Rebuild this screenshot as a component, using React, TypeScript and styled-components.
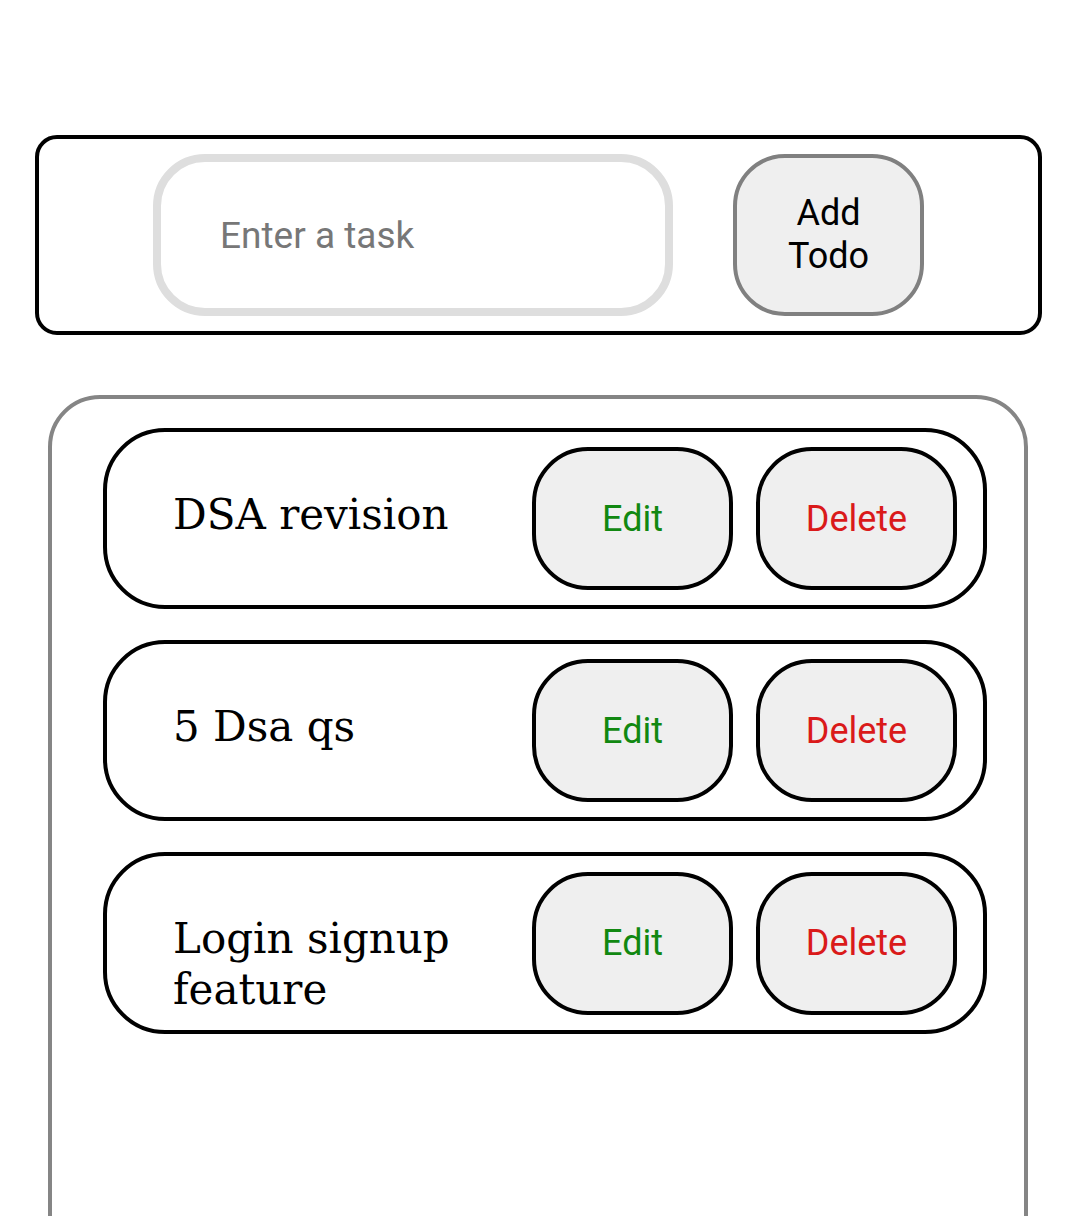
import React, { useState } from 'react';
import styled, { createGlobalStyle } from 'styled-components';

const GlobalStyle = createGlobalStyle`
  html, body {
    margin: 0;
    padding: 0;
    background: #fff;
  }
  body {
    font-family: Roboto, "Liberation Sans", sans-serif;
  }
`;

const Page = styled.div`
  display: flex;
  flex-direction: column;
  padding: 135px 37px 0 35px;
  gap: 60px;
  height: 1216px;
  box-sizing: border-box;
  overflow: hidden;
`;

const Form = styled.form`
  display: flex;
  justify-content: center;
  align-items: center;
  gap: 60px;
  padding: 15px 0;
  border: 4px solid #000;
  border-radius: 22px;
  width: 1007px;
  box-sizing: border-box;
`;

const TaskInput = styled.input`
  width: 520px;
  height: 162px;
  box-sizing: border-box;
  border: 8px solid #dedede;
  border-radius: 52px;
  padding: 0 0 0 59px;
  font-family: Roboto, "Liberation Sans", sans-serif;
  font-size: 37px;
  color: #222;
  outline: none;
  background: #fff;

  &::placeholder {
    color: #777;
  }
`;

const AddButton = styled.button`
  width: 191px;
  height: 162px;
  box-sizing: border-box;
  border: 4px solid #808080;
  border-radius: 52px;
  background: #efefef;
  font-family: Roboto, "Liberation Sans", sans-serif;
  font-size: 36px;
  line-height: 43px;
  color: #000;
  padding: 0 30px;
`;

const List = styled.div`
  display: flex;
  flex-direction: column;
  gap: 31px;
  margin-left: 13px;
  width: 980px;
  box-sizing: border-box;
  border: 4px solid #858585;
  border-radius: 52px 52px 0 0;
  padding: 29px 37px 0 51px;
  flex: 1;
  margin-bottom: -60px;
`;

const Card = styled.div`
  display: flex;
  align-items: center;
  gap: 23px;
  border: 4px solid #000;
  border-radius: 62px;
  padding: 15px 26px 15px 66px;
  width: 884px;
  box-sizing: border-box;
`;

const TaskText = styled.div`
  flex: 1;
  align-self: flex-start;
  margin-top: 42px;
  font-family: "DejaVu Serif", "Liberation Serif", serif;
  font-size: 42px;
  line-height: 51px;
  color: #000;
`;

const ActionButton = styled.button<{ $tone: 'edit' | 'delete' }>`
  width: 201px;
  height: 143px;
  box-sizing: border-box;
  border: 4px solid #000;
  border-radius: 56px;
  background: #efefef;
  font-family: Roboto, "Liberation Sans", sans-serif;
  font-size: 36px;
  color: ${({ $tone }) => ($tone === 'edit' ? '#118811' : '#da1a1a')};
`;

type Todo = { id: number; text: string };

const initial: Todo[] = [
  { id: 1, text: 'DSA revision' },
  { id: 2, text: '5 Dsa qs' },
  { id: 3, text: 'Login signup feature' },
];

export default function App() {
  const [todos, setTodos] = useState<Todo[]>(initial);
  const [value, setValue] = useState('');

  const addTodo = (e: React.FormEvent) => {
    e.preventDefault();
    if (!value.trim()) return;
    setTodos([...todos, { id: Date.now(), text: value }]);
    setValue('');
  };

  return (
    <>
      <GlobalStyle />
      <Page>
        <Form onSubmit={addTodo}>
          <TaskInput
            placeholder="Enter a task"
            value={value}
            onChange={(e) => setValue(e.target.value)}
          />
          <AddButton type="submit">Add Todo</AddButton>
        </Form>
        <List>
          {todos.map((todo) => (
            <Card key={todo.id}>
              <TaskText>{todo.text}</TaskText>
              <ActionButton $tone="edit">Edit</ActionButton>
              <ActionButton
                $tone="delete"
                onClick={() => setTodos(todos.filter((t) => t.id !== todo.id))}
              >
                Delete
              </ActionButton>
            </Card>
          ))}
        </List>
      </Page>
    </>
  );
}
